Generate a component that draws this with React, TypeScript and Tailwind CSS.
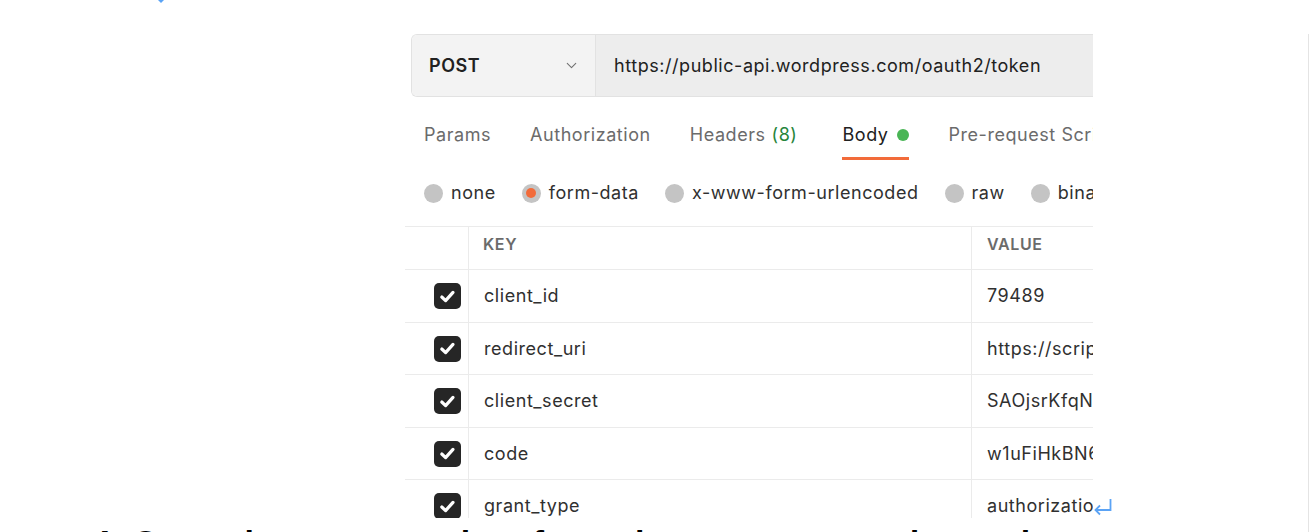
import React from 'react';
import { ChevronDown } from 'lucide-react';

const tabs = [
  { label: 'Params' },
  { label: 'Authorization' },
  { label: 'Headers', count: '(8)' },
  { label: 'Body', active: true },
  { label: 'Pre-request Script' },
  { label: 'Tests' },
];

const bodyTypes = [
  { label: 'none' },
  { label: 'form-data', selected: true },
  { label: 'x-www-form-urlencoded' },
  { label: 'raw' },
  { label: 'binary' },
  { label: 'GraphQL' },
];

const rows = [
  { key: 'client_id', value: '79489', h: 'h-[53px]' },
  { key: 'redirect_uri', value: 'https://scripts.example.com/callback', h: 'h-[52px]' },
  { key: 'client_secret', value: 'SAOjsrKfqNvH2xLpQe8', h: 'h-[53px]' },
  { key: 'code', value: 'w1uFiHkBN6sT0z', h: 'h-[52px]' },
  { key: 'grant_type', value: 'authorization_code', h: 'h-[53px]' },
];

const Radio: React.FC<{ selected?: boolean }> = ({ selected }) => (
  <span className="w-[19px] h-[19px] rounded-full bg-[#c4c4c4] flex items-center justify-center shrink-0">
    {selected && <span className="w-[10px] h-[10px] rounded-full bg-[#f26b3a]" />}
  </span>
);

const CheckBox: React.FC = () => (
  <span className="w-[27px] h-[26px] rounded-[5px] bg-[#262626] flex items-center justify-center">
    <svg width="17" height="15" viewBox="0 0 17 15" fill="none">
      <path d="M2.8 8 L6.6 11.6 L14 3.4" stroke="white" strokeWidth="3.2" strokeLinecap="round" strokeLinejoin="round" />
    </svg>
  </span>
);

const App: React.FC = () => {
  return (
    <div className="relative w-full h-[532px] overflow-hidden bg-white font-['Inter',sans-serif]">
      <div className="w-[1309px] h-full border-r border-[#e4e4e4]">
        {/* tail of the previous line's return mark */}
        <svg className="absolute top-0 left-[157px]" width="8" height="4" viewBox="0 0 8 4">
          <path d="M1 0 L4 3 L7 0 Z" fill="#5ba3f5" />
        </svg>

        {/* Postman screenshot */}
        <div className="ml-[405px] mt-[34px] w-[688px] h-[484px] overflow-hidden text-[18px] leading-[24px] tracking-[0.55px]">
          {/* URL bar */}
          <div className="ml-[6px] flex h-[63px] w-[682px] rounded-l-[6px] border border-r-0 border-[#e2e2e2] overflow-hidden">
            <div className="w-[184px] shrink-0 bg-[#f3f3f3] border-r border-[#e2e2e2] flex items-center pl-[17px] pr-[15px]">
              <span className="font-semibold text-[#212121]">POST</span>
              <ChevronDown className="ml-auto text-[#707070]" size={17} strokeWidth={1.5} />
            </div>
            <div className="flex-1 bg-[#ededed] flex items-center pl-[18px] text-[#212121] whitespace-nowrap">
              https://public-api.wordpress.com/oauth2/token
            </div>
          </div>

          {/* tabs */}
          <div className="mt-[26px] pl-[19px] flex gap-[39px] whitespace-nowrap">
            {tabs.map((t) => (
              <div
                key={t.label}
                className={`h-[37px] flex items-start border-b-[3px] ${
                  t.active ? 'ml-[6px] border-[#f26b3a] text-[#212121]' : 'border-transparent text-[#6b6b6b]'
                }`}
              >
                <span>{t.label}</span>
                {t.count && <span className="ml-[6px] text-[#26853b]">{t.count}</span>}
                {t.active && <span className="ml-[9px] mt-[6px] w-[12px] h-[12px] rounded-full bg-[#49b555]" />}
              </div>
            ))}
          </div>

          {/* body types */}
          <div className="h-[66px] pl-[19px] flex items-center gap-[26px] whitespace-nowrap text-[#303030]">
            {bodyTypes.map((b) => (
              <label key={b.label} className="flex items-center gap-[8px]">
                <Radio selected={b.selected} />
                <span>{b.label}</span>
              </label>
            ))}
          </div>

          {/* key / value table */}
          <div className="w-[1000px]">
            <div className="grid grid-cols-[64px_503px_433px] h-[43px] border-t border-[#ebebeb]">
              <div className="border-r border-[#ebebeb]" />
              <div className="border-r border-[#ebebeb] pl-[14px] pt-[5px] text-[16px] font-semibold text-[#6b6b6b] tracking-[0.6px]">
                KEY
              </div>
              <div className="pl-[15px] pt-[5px] text-[16px] font-semibold text-[#6b6b6b] tracking-[0.6px]">
                VALUE
              </div>
            </div>
            {rows.map((r) => (
              <div key={r.key} className={`grid grid-cols-[64px_503px_433px] ${r.h} border-t border-[#ebebeb]`}>
                <div className="border-r border-[#ebebeb] flex items-center pl-[29px]">
                  <CheckBox />
                </div>
                <div className="border-r border-[#ebebeb] pl-[15px] flex items-center text-[#303030]">
                  {r.key}
                </div>
                <div className="pl-[15px] flex items-center text-[#303030] whitespace-nowrap">{r.value}</div>
              </div>
            ))}
          </div>
        </div>

        {/* return mark after the image */}
        <svg className="absolute left-[1093px] top-[498px]" width="20" height="18" viewBox="0 0 20 18" fill="none">
          <path d="M17.5 1 V12 H2.5" stroke="#5ba3f5" strokeWidth="1.8" />
          <path d="M7 7.5 L2.5 12 L7 16.5" stroke="#5ba3f5" strokeWidth="1.8" />
        </svg>

        {/* next paragraph, mostly below the fold */}
        <p className="mt-[4px] ml-[92px] text-[34px] leading-[40px] font-bold text-black whitespace-nowrap tracking-[1px] font-['Liberation_Sans',sans-serif]">
          4. Copy the access token from the response and save it
        </p>
      </div>
    </div>
  );
};

export default App;
